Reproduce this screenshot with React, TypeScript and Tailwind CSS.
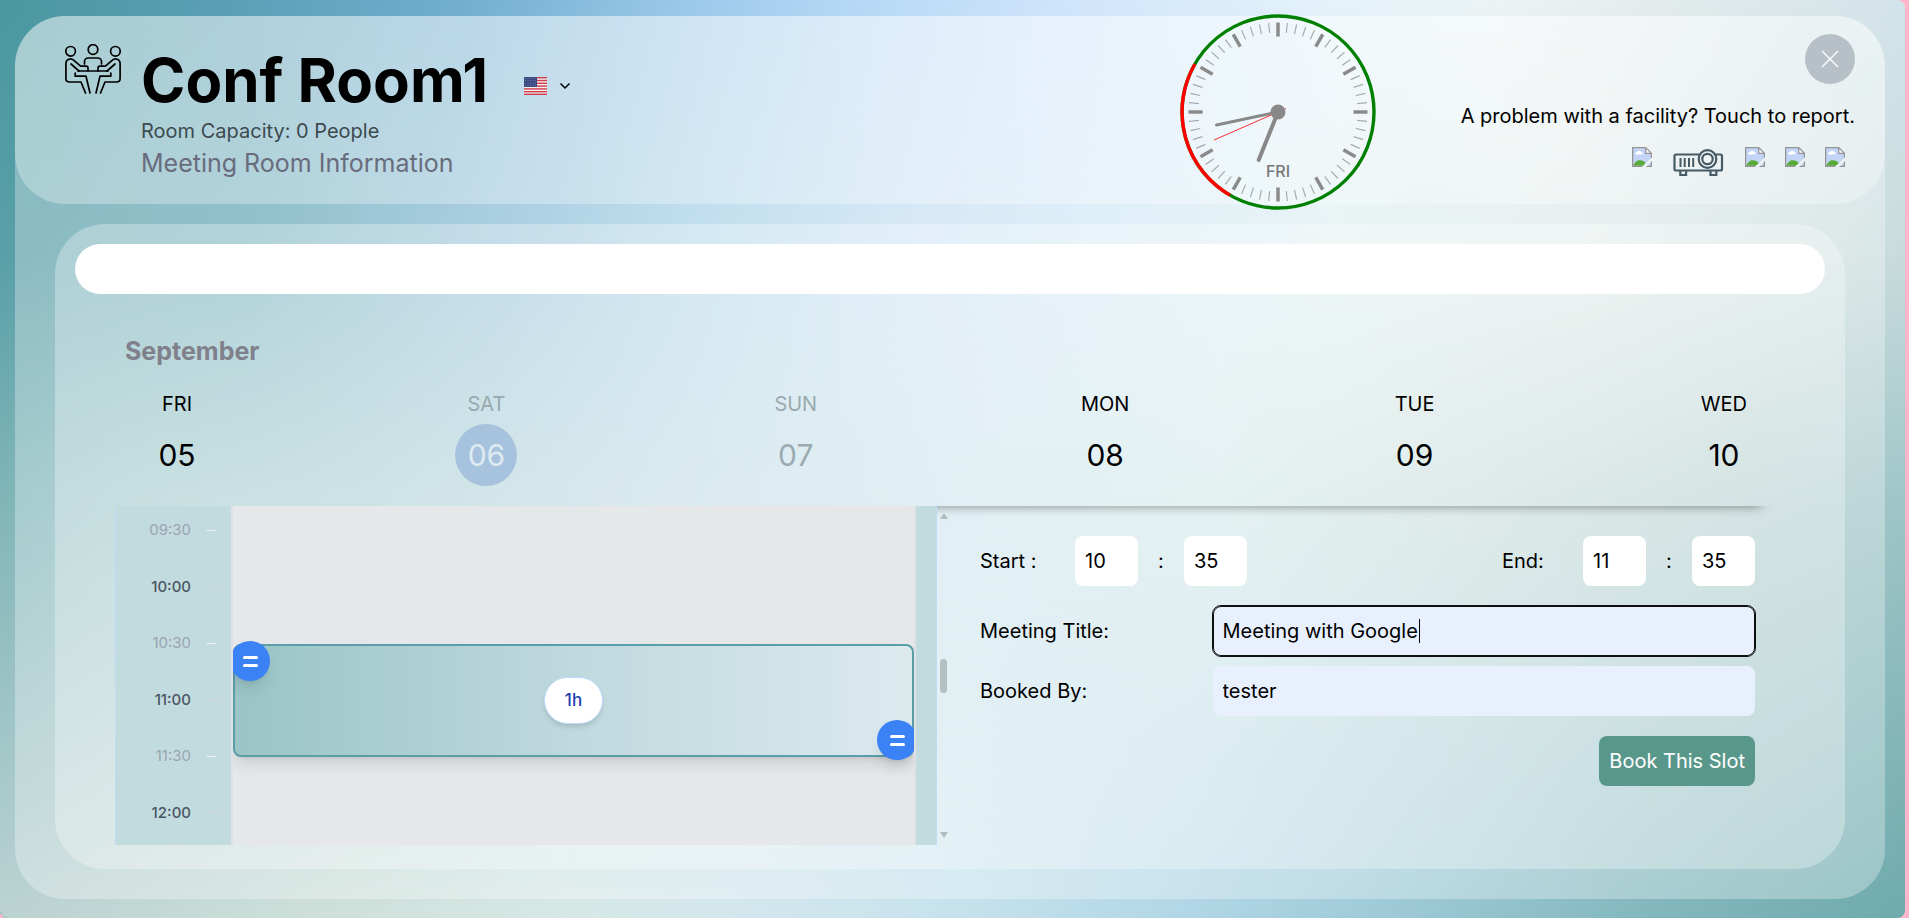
import React from "react";

const days = [
  { name: "FRI", date: "05", tone: "text-black", circle: "" },
  { name: "SAT", date: "06", tone: "text-[#97a9ad]", circle: "bg-[#a7c2dd] text-[#deebf1]" },
  { name: "SUN", date: "07", tone: "text-[#9aaab0]", circle: "" },
  { name: "MON", date: "08", tone: "text-black", circle: "" },
  { name: "TUE", date: "09", tone: "text-black", circle: "" },
  { name: "WED", date: "10", tone: "text-black", circle: "" },
];

const times = ["09:30", "10:00", "10:30", "11:00", "11:30", "12:00"];

function RoomIcon() {
  return (
    <svg viewBox="0 0 56 50" className="h-[50px] w-14 shrink-0" fill="none" stroke="#000" strokeWidth="1.7" strokeLinecap="round" strokeLinejoin="round" aria-hidden="true">
      <circle cx="5.6" cy="7.3" r="4.8" />
      <circle cx="28" cy="5.5" r="4.8" />
      <circle cx="50.4" cy="7.3" r="4.8" />
      <path d="M19.5 20v-2.4a3.6 3.6 0 0 1 3.6-3.6h9.8a3.6 3.6 0 0 1 3.6 3.6V20" />
      <path d="M13 27h30" />
      <path d="M20.5 49 16 38H4.4A3.6 3.6 0 0 1 .9 34.400V19.500C.9 15 5.800 13.600 8.600 16.200l7 6h5.400q2 0 2 2V27M6 20l8 7" />
      <path d="M10.200 29v3.200H21L25 49" />
      <path d="M35.500 49 40 38h11.600a3.600 3.600 0 0 0 3.500-3.600V19.500c0-4.500-4.900-5.900-7.700-3.300l-7 6H35q-2 0-2 2V27M50 20l-8 7" />
      <path d="M45.800 29v3.200H35L31 49" />
    </svg>
  );
}

function Flag() {
  return (
    <svg viewBox="0 0 23 18" className="h-[18px] w-[23px]" aria-hidden="true">
      <rect width="23" height="18" rx="1" fill="#f3eff2" />
      {[0, 2.8, 5.6, 8.4, 11.2, 14, 16.6].map((y) => (
        <rect key={y} y={y} width="23" height="1.4" fill="#cf3d4b" />
      ))}
      <rect width="13" height="10" fill="#3a4a80" />
      {[1.5, 4, 6.500, 9].map((y) =>
        [1.5, 4, 6.500, 9, 11.500].map((x) => <circle key={`${x}-${y}`} cx={x} cy={y - 0.3} r="0.45" fill="#9aa6c8" />)
      )}
    </svg>
  );
}

function BrokenImage() {
  return (
    <svg viewBox="0 0 16 16" className="h-5 w-5" role="img" aria-label="Facility">
      <path d="M.5.500H11L15.500 5v10.500H.5z" fill="#c3d5f7" />
      <path d="M2.500 5.500a1.300 1.300 0 0 1 1.500-1.500 1.800 1.800 0 0 1 3.300 0A1.200 1.200 0 0 1 8.200 6H3z" fill="#fff" />
      <path d="M1 15c1-3 3-4.500 5.200-4.500S10 11.500 11 13l-2 2z" fill="#58ab38" />
      <path d="M11 .5V5h4.500z" fill="#fff" />
      <path d="M.5 15.500V.500H11L15.500 5v10.500zM11 .5V5h4.500" fill="none" stroke="#949494" />
      <path d="M16 8.200V11l-4.800 5H7.800z" fill="#edf4f4" />
    </svg>
  );
}

function Projector() {
  return (
    <svg viewBox="0 0 53 30" className="h-[30px] w-[53px]" fill="none" stroke="#455a64" strokeWidth="2.2" role="img" aria-label="Projector">
      <rect x="2.500" y="7.500" width="47.500" height="16" rx="1.500" />
      <path d="M8.500 11v9M12.700 11v9M17 11v9M21.200 11v9" strokeWidth="2" />
      <path d="M8.300 23.500V28h5.800v-4.500M38.500 23.500V28h5.800v-4.500" />
      <circle cx="35.500" cy="12" r="8.800" fill="#eef4f5" />
      <circle cx="35.500" cy="12" r="5.200" />
    </svg>
  );
}

function Clock() {
  return (
    <svg viewBox="-98 -98 196 196" className="h-49 w-49 shrink-0" role="img" aria-label="Clock">
      <circle r="96" fill="#fff" fillOpacity="0.1" stroke="#008000" strokeWidth="3.400" />
      <path d="M-48 83.100A96 96 0 0 1-83.100-48" fill="none" stroke="#f00" strokeWidth="3.400" />
      {Array.from({ length: 60 }, (_, i) => (
        <line
          key={i}
          y1={-89.500}
          y2={i % 5 === 0 ? -75.500 : -79.500}
          stroke={i % 5 === 0 ? "#8a8a8a" : "#a8abad"}
          strokeWidth={i % 5 === 0 ? 3.500 : 1.200}
          transform={`rotate(${i * 6})`}
        />
      ))}
      <text y="65" textAnchor="middle" className="fill-[#777] font-[Inter,sans-serif] text-base font-medium">FRI</text>
      <line x2="-19.300" y2="48" stroke="#888" strokeWidth="4" strokeLinecap="round" />
      <line x2="-61.500" y2="13" stroke="#888" strokeWidth="3" strokeLinecap="round" />
      <line x1="8" y1="-3.500" x2="-64" y2="28" stroke="#f00" strokeOpacity="0.8" strokeWidth="1" />
      <circle r="7.500" fill="#888" />
    </svg>
  );
}

function Handle({ place }: { place: string }) {
  return (
    <button type="button" aria-label="Resize booking" className={`absolute flex h-10 w-10 flex-col items-center justify-center gap-[5px] rounded-full bg-[#3b82f6] shadow-lg ${place}`}>
      <span className="h-[3px] w-[15px] rounded-sm bg-white" />
      <span className="h-[3px] w-[15px] rounded-sm bg-white" />
    </button>
  );
}

function TimeFields({ id, label, labelWidth, hour, minute }: { id: string; label: string; labelWidth: string; hour: string; minute: string }) {
  const field = "h-[50px] w-[63px] rounded-lg bg-white px-2.5";
  return (
    <div className="flex items-center">
      <label htmlFor={id} className={labelWidth}>{label}</label>
      <input id={id} defaultValue={hour} className={field} />
      <span className="w-[46px] text-center">:</span>
      <input aria-label={`${label} minutes`} defaultValue={minute} className={field} />
    </div>
  );
}

function Schedule() {
  return (
    <div className="flex h-[339px]">
      <div className="flex flex-1 overflow-hidden border-x border-[#bfdbf5] bg-[#c2dbdf] pr-5">
        <div className="-mt-1 grid h-[339px] w-[115px] grid-rows-6 pr-[9px] text-[15px] leading-5">
          {times.map((time) => {
            const half = time.endsWith("30");
            return (
              <div key={time} className={`flex items-center justify-end gap-[15px] ${half ? "text-[#9ba5b0]" : "font-medium text-[#4b5563]"}`}>
                {time}
                <span className="w-4">
                  <span className={`block h-px ${half ? "w-2.5 bg-[#e9ecef]" : "w-4 bg-[#cfd5dc]"}`} />
                </span>
              </div>
            );
          })}
        </div>
        <div className="flex-1 border-x-2 border-[#dfe1e5] bg-[#e5e7eb]">
          <div className="relative h-full overflow-hidden">
            <div className="absolute inset-x-0 top-[138px] flex h-[113px] items-center justify-center rounded-lg border-2 border-[#5a9ea8] bg-linear-to-r from-[#9ac4c6] via-[#bfd9de] to-[#dceaee] shadow-lg">
              <span className="flex h-[47px] items-center rounded-full border border-blue-200 bg-white px-5 text-[17px] font-medium text-[#1e40af] shadow-md">1h</span>
              <Handle place="-top-[5px] -left-[5px]" />
              <Handle place="-right-[5px] -bottom-[5px]" />
            </div>
          </div>
        </div>
      </div>
      <div className="flex w-[13px] flex-col items-center justify-between py-[7px]">
        <svg viewBox="0 0 8 6" className="h-1.5 w-2" aria-hidden="true"><path d="M4 0 8 6H0z" fill="#b0bdbf" /></svg>
        <span className="h-[34px] w-[7px] rounded-full bg-[#b3c0c1]" />
        <svg viewBox="0 0 8 6" className="h-1.5 w-2" aria-hidden="true"><path d="M0 0h8L4 6z" fill="#b0bdbf" /></svg>
      </div>
    </div>
  );
}

function BookingForm() {
  return (
    <form className="pt-[30px] pr-5 pl-[30px]" onSubmit={(e) => e.preventDefault()}>
      <div className="flex justify-between">
        <TimeFields id="start" label="Start :" labelWidth="w-[95px]" hour="10" minute="35" />
        <TimeFields id="end" label="End:" labelWidth="w-[81px]" hour="11" minute="35" />
      </div>
      <div className="mt-5 grid grid-cols-[30%_70%] items-center gap-y-2.5">
        <label htmlFor="title">Meeting Title:</label>
        <div className="relative">
          <input id="title" defaultValue="Meeting with Google" className="h-[50px] w-full rounded-lg border border-[#101010] bg-[#e8f0fe] px-[9px] outline outline-[#101010]" />
          <span className="absolute top-[13px] left-[206px] h-6 w-px bg-black" />
        </div>
        <label htmlFor="booker">Booked By:</label>
        <input id="booker" defaultValue="tester" className="h-[50px] w-full rounded-lg bg-[#e8f0fe] px-2.5" />
      </div>
      <div className="mt-5 flex justify-end">
        <button type="submit" className="h-[50px] rounded-lg bg-[#5a978b] px-2.5 text-white">Book This Slot</button>
      </div>
    </form>
  );
}

function Backdrop() {
  return (
    <div className="absolute inset-0 bg-[linear-gradient(to_right,#4a989f_0%,#5b9fb6_12%,#72aed0_24%,#9ecbec_37%,#b9daf6_46%,#d0e5fb_56%,#e5f3fa_70%,#ecf3f4_79%,#e0e9eb_90%,#d3e4ea_100%)]">
      <div className="absolute inset-0 bg-[linear-gradient(to_right,#5a9fa8_0%,#62a6b2_13%,#88bbd4_26%,#acd4e7_38%,#c7dff1_48%,#d0e7f4_57%,#deeeef_70%,#dee8e7_83%,#c8dbdc_100%)] [mask-image:linear-gradient(to_bottom,transparent,black_28%)]" />
      <div className="absolute inset-0 bg-[linear-gradient(to_right,#80b5b8_0%,#8fbfc2_8%,#9ac5ca_19%,#b0d2dc_32%,#c4e0e9_50%,#cae4e5_64%,#bed7d4_77%,#a9c7c7_92%,#a0c6c8_100%)] [mask-image:linear-gradient(to_bottom,transparent_28%,black_54%)]" />
      <div className="absolute inset-0 bg-[linear-gradient(to_right,#bbd2d2_0%,#cfe0da_17%,#d7e8e5_29%,#d5e7ed_38%,#c6e2ec_50%,#b1d6e6_62%,#9bc8d5_74%,#83b7be_86%,#6eaaac_100%)] [mask-image:linear-gradient(to_bottom,transparent_54%,black)]" />
    </div>
  );
}

export default function App() {
  return (
    <div className="min-h-screen bg-[#ffb6cb] pr-1 font-[Inter,sans-serif] text-xl text-black">
      <div className="relative flex min-h-screen flex-col overflow-hidden rounded-r-lg rounded-bl-lg pt-4 pr-5 pb-[19px] pl-[15px]">
        <Backdrop />
        <main className="relative flex-1 rounded-[50px] bg-white/30 pb-[30px]">
          <header className="flex h-47 items-start rounded-[50px] bg-white/30 pr-[30px] pl-[50px]">
            <div className="flex flex-1 gap-5 pt-7">
              <RoomIcon />
              <div className="pt-1.5">
                <div className="flex items-center gap-9">
                  <h1 className="text-6xl leading-[60px] font-bold">Conf Room1</h1>
                  <button type="button" aria-label="Language" className="flex items-center gap-3 pt-3">
                    <Flag />
                    <svg viewBox="0 0 12 8" className="h-2 w-3" fill="none" stroke="#000" strokeWidth="1.500" aria-hidden="true"><path d="m1.500 1.500 4.500 4.500 4.500-4.500" /></svg>
                  </button>
                </div>
                <p className="mt-[7px] leading-7 text-[#3d4a4f]">Room Capacity: 0 People</p>
                <p className="mt-0.5 text-[25px] leading-8 text-[#696c7c]">Meeting Room Information</p>
              </div>
            </div>
            <div className="-mt-0.5"><Clock /></div>
            <div className="flex w-[479px] flex-col items-end pt-[18px]">
              <button type="button" aria-label="Close" className="flex h-[50px] w-[50px] items-center justify-center rounded-full bg-[#b7c0c7]">
                <svg viewBox="0 0 18 18" className="h-[18px] w-[18px]" stroke="#fff" strokeWidth="1.300" aria-hidden="true"><path d="m1 1 16 16M17 1 1 17" /></svg>
              </button>
              <p className="mt-[18px] leading-7">A problem with a facility? Touch to report.</p>
              <div className="mt-[17px] flex items-start gap-5 pr-2.5">
                <BrokenImage />
                <Projector />
                <BrokenImage />
                <BrokenImage />
                <BrokenImage />
              </div>
            </div>
          </header>

          <section className="mx-10 mt-5 rounded-[50px] bg-white/30 p-5 pb-6">
            <div className="h-[50px] rounded-full bg-white" />
            <div className="mr-[50px] ml-10">
              <div className="pt-[41px] pb-5 shadow-[0_14px_10px_-14px_rgba(0,0,0,0.45)]">
                <h2 className="pl-2.5 text-[25px] leading-8 font-bold text-[#7f808c]">September</h2>
                <div className="mt-[23px] flex justify-between pr-5 pl-[31px]">
                  {days.map((day) => (
                    <button type="button" key={day.date} className={`flex w-[62px] flex-col items-center gap-1.5 ${day.tone}`}>
                      <span className="leading-7">{day.name}</span>
                      <span className={`flex h-[62px] w-[62px] items-center justify-center rounded-full text-3xl ${day.circle}`}>{day.date}</span>
                    </button>
                  ))}
                </div>
              </div>
              <div className="grid grid-cols-[835fr_825fr]">
                <Schedule />
                <BookingForm />
              </div>
            </div>
          </section>
        </main>
      </div>
    </div>
  );
}
